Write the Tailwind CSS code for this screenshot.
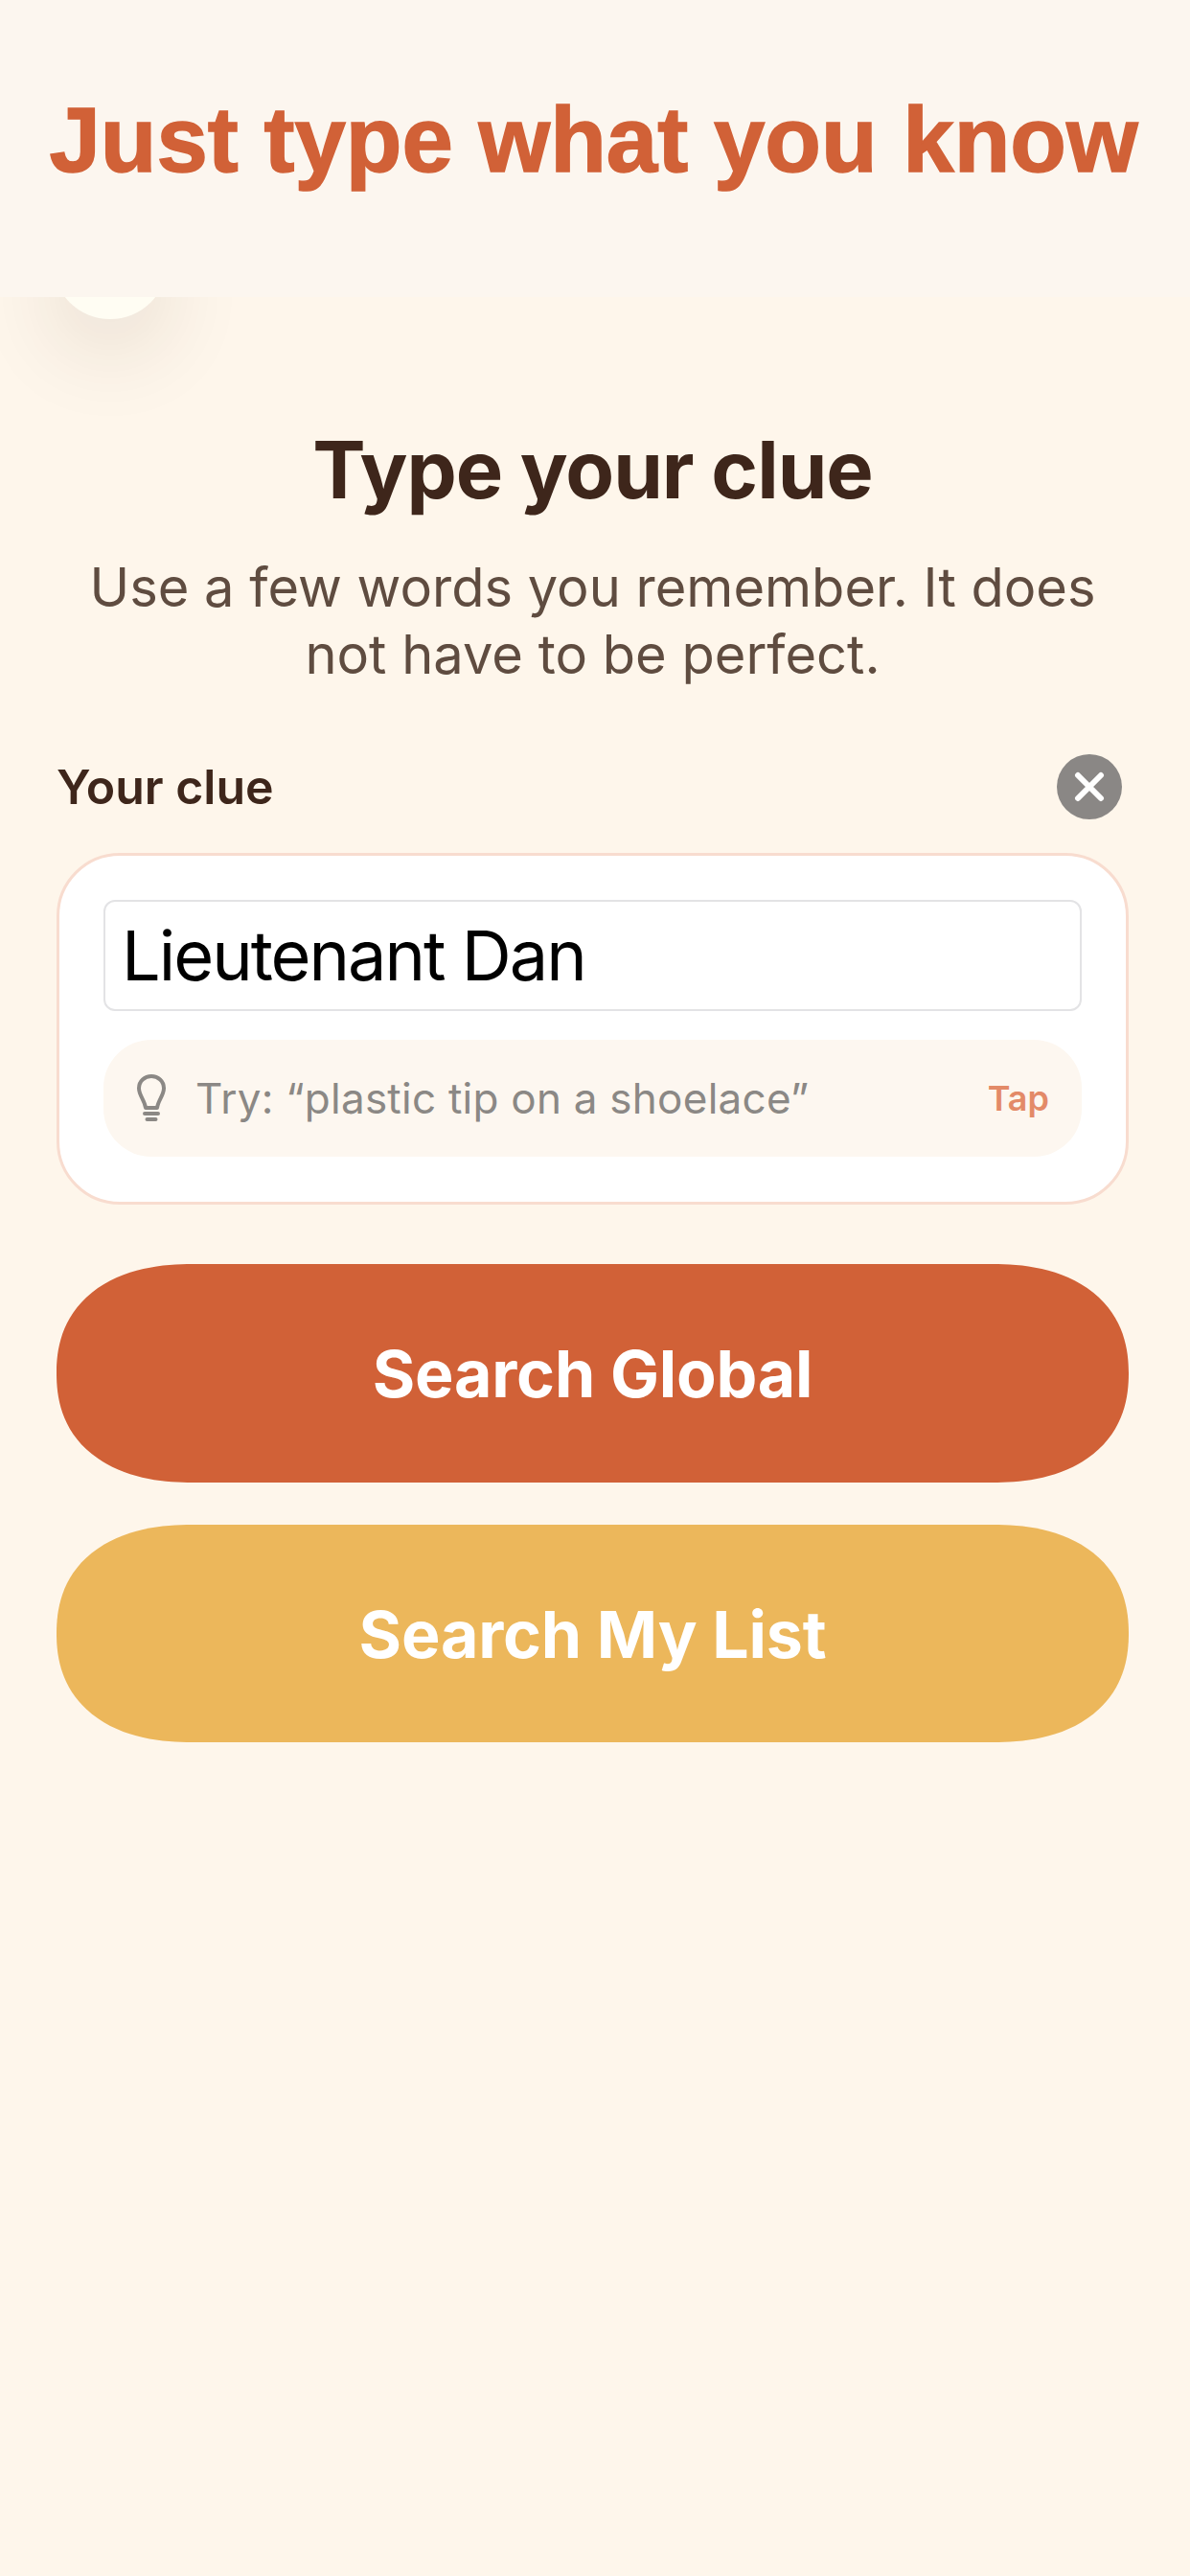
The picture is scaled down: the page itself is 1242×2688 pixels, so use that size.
<!DOCTYPE html>
<html lang="en">
<head>
    <meta charset="UTF-8">
    <meta name="viewport" content="width=device-width, initial-scale=1.0">
    <title>Type your clue</title>
    <script src="https://cdn.jsdelivr.net/npm/@tailwindcss/browser@4"></script>
</head>
<body class="bg-[#fef6eb] font-['Inter',sans-serif]">
    <div class="relative w-[1242px] h-[2688px] overflow-hidden">
        <!-- circle peeking out under the banner -->
        <div class="absolute left-[55px] top-[213px] w-[120px] h-[120px] rounded-full bg-[#fffdf3] shadow-[0_34px_90px_rgba(60,40,20,0.11)]"></div>

        <header class="relative h-[310px] bg-[#fcf6ef] flex justify-center pt-[91px] pr-[3px]">
            <h1 class="font-['Liberation_Sans',sans-serif] font-bold text-[96px] leading-[110px] [-webkit-text-stroke:1.5px_#d16137] text-[#d16137] whitespace-nowrap">Just type what you know</h1>
        </header>

        <main class="pl-[59px] pr-[64px] pt-[135px]">
            <h2 class="text-center font-bold text-[83px] leading-[90px] tracking-[-1px] text-[#3e261b]">Type your clue</h2>
            <p class="mt-[43px] text-center text-[56px] leading-[70px] text-[#5f4c40]">Use a few words you remember. It does<br>not have to be perfect.</p>

            <div class="mt-[69px] flex items-center justify-between pr-[7px]">
                <span class="font-semibold text-[50px] leading-[68px] text-[#3e261b]">Your clue</span>
                <button class="w-[68px] h-[68px] rounded-full bg-[#8a8785] flex items-center justify-center">
                    <svg width="32" height="32" viewBox="0 0 32 32" fill="none" stroke="#fff" stroke-width="6" stroke-linecap="round"><path d="M4 4 28 28M28 4 4 28"/></svg>
                </button>
            </div>

            <div class="mt-[35px] h-[367px] rounded-[66px] border-[3px] border-[#f8dccf] bg-white px-[46px] pt-[46px]">
                <div class="h-[116px] rounded-[12px] border-2 border-[#e3e3e5] bg-white flex items-center pl-[17px] text-[72px] tracking-[-2px] text-black">Lieutenant Dan</div>
                <div class="mt-[30px] h-[122px] rounded-[50px] bg-[#fdf7f0] flex items-center pl-[35px] pr-[34px]">
                    <svg width="30" height="50" viewBox="0 0 30 50" fill="none" stroke="#8b8885" stroke-width="4" stroke-linecap="round" stroke-linejoin="round"><path d="M9 35C8 27 2 22 2 14.500C2 7 8 2 15 2S28 7 28 14.500C28 22 22 27 21 35Z"/><path d="M8 41H22M10.500 47H19.500"/></svg>
                    <span class="ml-[31px] text-[44px] tracking-[0.25px] text-[#8b8885]">Try: “plastic tip on a shoelace”</span>
                    <span class="ml-auto font-semibold text-[36px] text-[#e38a68]">Tap</span>
                </div>
            </div>

            <button class="mt-[62px] block w-full h-[228px] rounded-[142px/114px] [corner-shape:superellipse(1.2)] bg-[#d16137] text-white font-bold text-[68px] tracking-[-0.2px]">Search Global</button>
            <button class="mt-[44px] block w-full h-[227px] rounded-[142px/114px] [corner-shape:superellipse(1.2)] bg-[#ecb75b] text-white font-bold text-[68px] tracking-[-0.2px]">Search My List</button>
        </main>
    </div>
</body>
</html>
